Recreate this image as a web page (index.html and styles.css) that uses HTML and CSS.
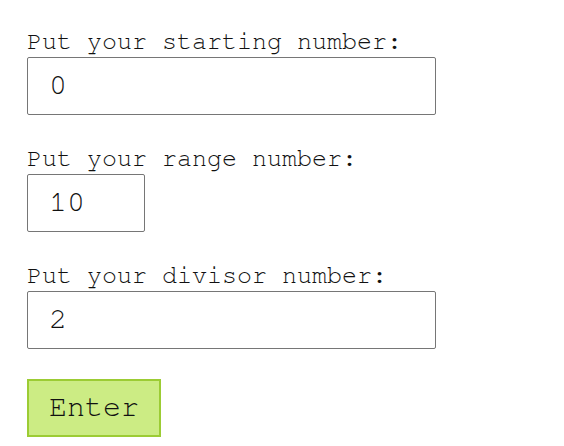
FILE: index.html
```html
<!DOCTYPE html>
<html>
<head>
<meta charset="utf-8">
<link rel="stylesheet" href="styles.css">
</head>
<body>
<form class="form">
  <label class="field">
    <span class="label">Put your starting number:</span>
    <input class="input input-wide" type="text" value="0">
  </label>
  <label class="field">
    <span class="label">Put your range number:</span>
    <input class="input input-narrow" type="text" value="10">
  </label>
  <label class="field">
    <span class="label">Put your divisor number:</span>
    <input class="input input-wide" type="text" value="2">
  </label>
  <button class="button" type="button">Enter</button>
</form>
</body>
</html>
```
FILE: styles.css
```css
html, body {
  margin: 0;
  padding: 0;
  background: #fff;
}
body {
  font-family: "Nimbus Mono PS", "Nimbus Mono L", "FreeMono", "Courier New", "Liberation Mono", monospace;
  color: #111;
}
.form {
  display: flex;
  flex-direction: column;
  align-items: flex-start;
  padding: 30px 27px;
}
.field {
  display: flex;
  flex-direction: column;
  align-items: flex-start;
  margin-bottom: 32px;
}
.label {
  font-size: 25px;
  line-height: 23px;
  padding-bottom: 4px;
  color: #111;
}
.input {
  box-sizing: border-box;
  height: 58px;
  border: 1px solid #767676;
  border-radius: 2px;
  padding: 0 0 2px 21px;
  font-family: inherit;
  font-size: 30px;
  color: #111;
  background: #fff;
  outline: none;
}
.input-wide {
  width: 409px;
}
.input-narrow {
  width: 118px;
}
.button {
  box-sizing: border-box;
  width: 134px;
  height: 58px;
  border: 2px solid #9ccc34;
  background: #ccec84;
  font-family: inherit;
  font-size: 30px;
  color: #111;
  padding: 0 0 3px;
  margin-top: -2px;
}
```
